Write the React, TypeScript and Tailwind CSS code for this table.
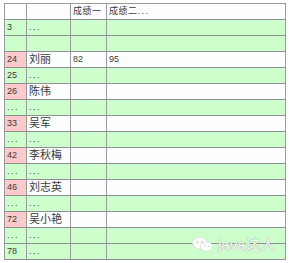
import React from "react";

type Row = { id: string; name: string; s1?: string; s2?: string; kind: "green" | "person" | "header" };

const D = "...";

const rows: Row[] = [
  { id: "", name: "", s1: "成绩一", s2: "", kind: "header" },
  { id: "3", name: D, kind: "green" },
  { id: "", name: "", kind: "green" },
  { id: "24", name: "刘丽", s1: "82", s2: "95", kind: "person" },
  { id: "25", name: D, kind: "green" },
  { id: "26", name: "陈伟", kind: "person" },
  { id: D, name: D, kind: "green" },
  { id: "33", name: "吴军", kind: "person" },
  { id: D, name: D, kind: "green" },
  { id: "42", name: "李秋梅", kind: "person" },
  { id: D, name: D, kind: "green" },
  { id: "46", name: "刘志英", kind: "person" },
  { id: D, name: D, kind: "green" },
  { id: "72", name: "吴小艳", kind: "person" },
  { id: D, name: D, kind: "green" },
  { id: "78", name: D, kind: "green" },
];

function Txt({ t }: { t?: string }) {
  if (t === D) return <span className="tracking-[1.5px]">{D}</span>;
  return <>{t}</>;
}

function Cell({ children, bg, w, size }: { children?: React.ReactNode; bg: string; w: string; size: "sm" | "big" }) {
  const cls = size === "big" ? "text-[11px]" : "text-[9px]";
  return (
    <div
      className={`${w} ${bg} h-full border-r border-[#9a9a9a] flex items-center pl-[2px] overflow-hidden whitespace-nowrap text-[#3a3a3a] ${cls}`}
    >
      {children}
    </div>
  );
}

export default function App() {
  return (
    <div
      className="relative w-[300px] h-[263px] bg-white pt-[3px] pl-[4px]"
      style={{ fontFamily: '"Liberation Sans", "Noto Sans CJK SC", sans-serif' }}
    >
      <div className="w-[282px] border-l border-t border-[#9a9a9a]">
        {rows.map((r, i) => {
          const green = r.kind === "green";
          const header = r.kind === "header";
          const idBg = green ? "bg-[#ccffcc]" : header ? "bg-white" : "bg-[#fccaca]";
          const rest = green ? "bg-[#ccffcc]" : "bg-[#fdfdff]";
          return (
            <div key={i} className="flex h-[16px] border-b border-[#8f8f8f]">
              <Cell w="w-[22px]" bg={idBg} size="sm"><Txt t={r.id} /></Cell>
              <Cell w="w-[44px]" bg={rest} size={r.kind === "person" ? "big" : "sm"}><Txt t={r.name} /></Cell>
              <Cell w="w-[36px]" bg={rest} size="sm">
                {header ? <span className="tracking-[0.5px]">成绩一</span> : r.s1}
              </Cell>
              <Cell w="w-[179px]" bg={rest} size="sm">
                {header ? (
                  <>
                    <span className="tracking-[0.5px]">成绩二</span>
                    <span className="tracking-[1.5px]">{D}</span>
                  </>
                ) : (
                  r.s2
                )}
              </Cell>
            </div>
          );
        })}
      </div>
      <div className="absolute left-[192px] top-[236px] flex items-center gap-[4px] opacity-90">
        <svg width="22" height="17" viewBox="0 0 22 17">
          <ellipse cx="8" cy="7" rx="7.5" ry="6" fill="#fff" stroke="#d8d8d8" strokeWidth="0.8" />
          <ellipse cx="14.5" cy="10.5" rx="6" ry="5" fill="#fff" stroke="#d8d8d8" strokeWidth="0.8" />
          <circle cx="5.5" cy="6" r="1" fill="#cfcfcf" />
          <circle cx="10" cy="6" r="1" fill="#cfcfcf" />
          <circle cx="12.5" cy="10" r="0.8" fill="#cfcfcf" />
          <circle cx="16.5" cy="10" r="0.8" fill="#cfcfcf" />
        </svg>
        <span
          className="text-[15px] text-white leading-none"
          style={{ textShadow: "0 0 1px #9a9a9a, 0 0 1px #9a9a9a" }}
        >
          java达人
        </span>
      </div>
    </div>
  );
}
